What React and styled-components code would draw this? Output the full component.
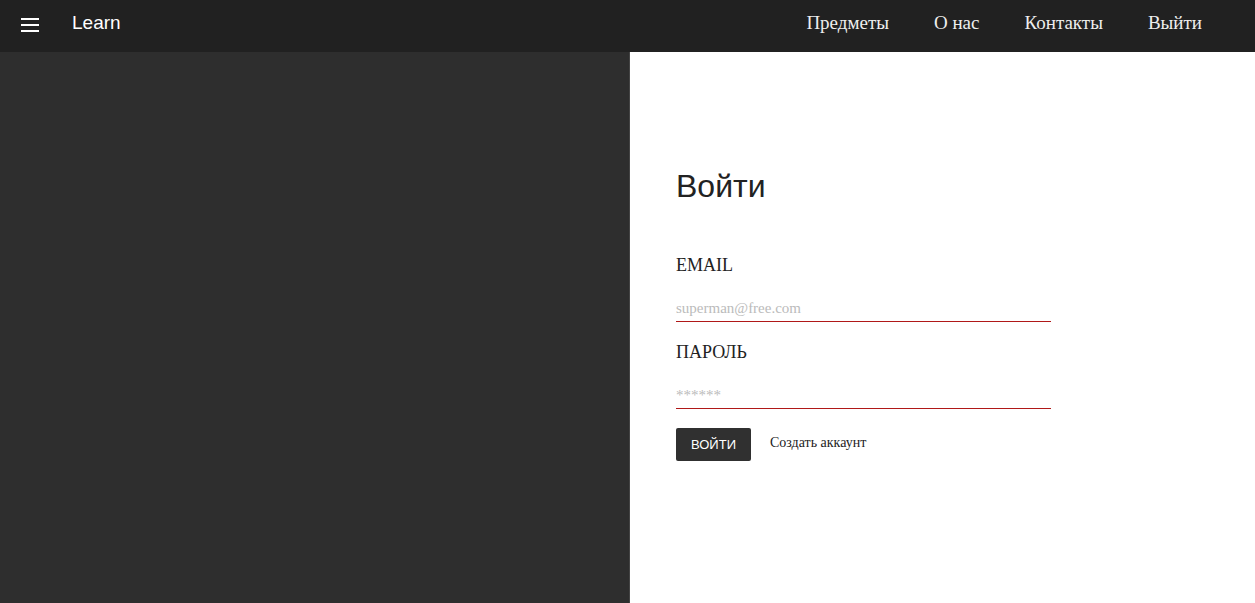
import React from "react";
import styled, { createGlobalStyle } from "styled-components";

const Global = createGlobalStyle`
  html, body { margin: 0; padding: 0; height: 100%; }
  body { font-family: "Liberation Serif", serif; background: #fff; }
  #root { height: 100%; }
  * { box-sizing: border-box; }
`;

const Page = styled.div`
  display: flex;
  flex-direction: column;
  height: 603px;
`;

const Header = styled.header`
  height: 52px;
  background: #212121;
  display: flex;
  align-items: center;
  padding: 0 0 0 21px;
  flex-shrink: 0;
`;

const Burger = styled.button`
  border: 0;
  background: none;
  padding: 0;
  width: 18px;
  height: 14px;
  display: flex;
  flex-direction: column;
  justify-content: space-between;
  cursor: pointer;
  margin-top: -2px;
  span {
    display: block;
    height: 2px;
    background: #fff;
  }
`;

const Brand = styled.div`
  font-family: Arial, "Liberation Sans", sans-serif;
  color: #fff;
  font-size: 19px;
  margin-left: 33px;
  margin-top: -7px;
`;

const Nav = styled.nav`
  margin-left: auto;
  display: flex;
  gap: 45px;
  padding-right: 53px;
  margin-top: -7px;
`;

const NavLink = styled.a`
  font-family: "Liberation Serif", serif;
  color: #eee;
  font-size: 19px;
  text-decoration: none;
  cursor: pointer;
`;

const Body = styled.div`
  flex: 1;
  display: grid;
  grid-template-columns: 630px 1fr;
`;

const DarkPane = styled.div`
  background: #2e2e2e;
  border-right: 1px solid #444;
`;

const FormPane = styled.div`
  background: #fff;
  padding: 116px 0 0 46px;
`;

const Title = styled.h1`
  font-family: Arial, "Liberation Sans", sans-serif;
  font-weight: 400;
  font-size: 32px;
  color: #222;
  margin: 0 0 50px;
`;

const Form = styled.form`
  width: 375px;
  display: flex;
  flex-direction: column;
`;

const Label = styled.label`
  font-family: "Liberation Serif", serif;
  font-size: 18px;
  color: #222;
  display: block;
  margin-bottom: 24px;
`;

const Input = styled.input`
  width: 100%;
  border: 0;
  border-bottom: 1px solid #b01818;
  font-family: "Liberation Serif", serif;
  font-size: 15px;
  padding: 0 0 4px;
  outline: none;
  margin-bottom: ${(p) => (p.$last ? "19px" : "20px")};
  color: #333;
  &::placeholder { color: #bbb; }
`;

const Actions = styled.div`
  display: flex;
  align-items: center;
  gap: 19px;
`;

const Button = styled.button`
  font-family: Arial, "Liberation Sans", sans-serif;
  background: #303030;
  color: #fff;
  font-size: 13px;
  border: 0;
  border-radius: 2px;
  width: 75px;
  height: 33px;
  cursor: pointer;
`;

const Link = styled.a`
  font-family: "Liberation Serif", serif;
  font-size: 14px;
  color: #222;
  text-decoration: none;
  margin-top: -4px;
`;

export default function App() {
  return (
    <>
      <Global />
      <Page>
        <Header>
          <Burger aria-label="menu">
            <span />
            <span />
            <span />
          </Burger>
          <Brand>Learn</Brand>
          <Nav>
            <NavLink>Предметы</NavLink>
            <NavLink>О нас</NavLink>
            <NavLink>Контакты</NavLink>
            <NavLink>Выйти</NavLink>
          </Nav>
        </Header>
        <Body>
          <DarkPane />
          <FormPane>
            <Title>Войти</Title>
            <Form onSubmit={(e) => e.preventDefault()}>
              <Label>EMAIL</Label>
              <Input placeholder="superman@free.com" />
              <Label>ПАРОЛЬ</Label>
              <Input $last placeholder="******" />
              <Actions>
                <Button type="submit">ВОЙТИ</Button>
                <Link>Создать аккаунт</Link>
              </Actions>
            </Form>
          </FormPane>
        </Body>
      </Page>
    </>
  );
}
